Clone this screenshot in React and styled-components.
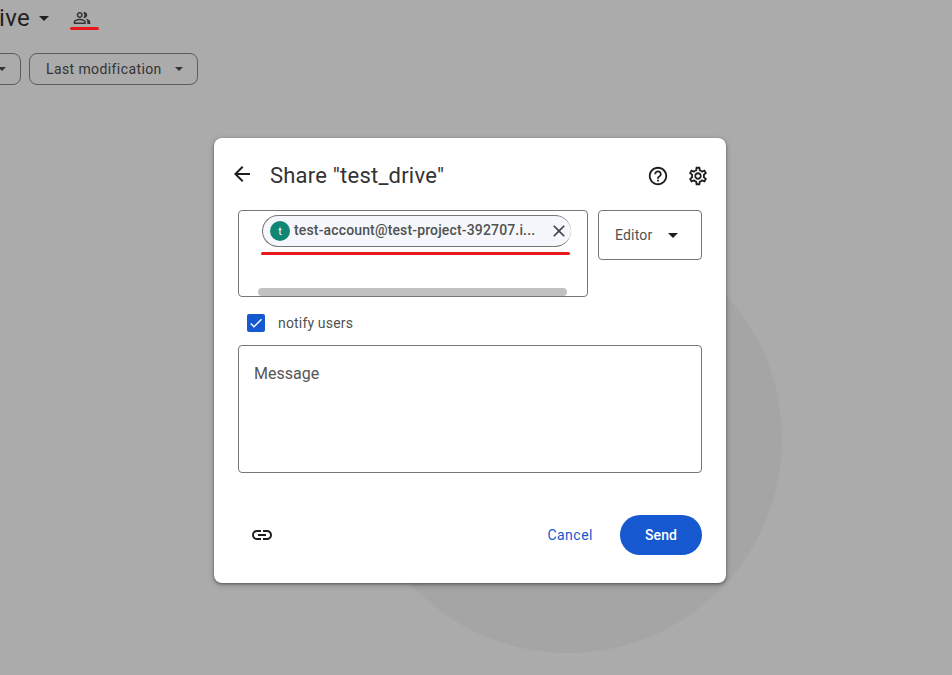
import styled, { createGlobalStyle } from "styled-components";
import {
  MdArrowBack,
  MdCheck,
  MdClose,
  MdHelpOutline,
  MdLink,
  MdOutlinePeopleAlt,
  MdOutlineSettings,
} from "react-icons/md";

const GlobalStyle = createGlobalStyle`
  html, body {
    margin: 0;
    height: 100%;
    background: #ababab;
    overflow: hidden;
  }
  body {
    font-family: Roboto, "Liberation Sans", sans-serif;
  }
`;

const Page = styled.div`
  position: relative;
  width: 952px;
  height: 675px;
  overflow: hidden;
`;

const TopBar = styled.div`
  display: flex;
  align-items: center;
  height: 36px;
`;

const DriveName = styled.div`
  font-size: 24px;
  line-height: 36px;
  letter-spacing: 0.3px;
  color: #222;
  margin-left: -1px;
`;

const Caret = styled.span`
  display: inline-block;
  width: 0;
  height: 0;
  flex: none;
  border-left: ${({ size }) => size}px solid transparent;
  border-right: ${({ size }) => size}px solid transparent;
  border-top: ${({ size }) => size}px solid ${({ color }) => color};
`;

const NameCaret = styled(Caret)`
  margin-left: 9px;
`;

const PeopleButton = styled.div`
  position: relative;
  display: flex;
  margin-left: 24px;
  font-size: 18px;
  color: #333;

  &::after {
    content: "";
    position: absolute;
    left: -3px;
    bottom: -3px;
    width: 29px;
    height: 3px;
    border-radius: 2px;
    background: #e8171c;
  }
`;

const FilterRow = styled.div`
  display: flex;
  gap: 8px;
  margin: 17px 0 0 -60px;
`;

const FilterChip = styled.div`
  box-sizing: border-box;
  display: flex;
  align-items: center;
  justify-content: space-between;
  width: ${({ width }) => width}px;
  height: 32px;
  padding: 0 14px 0 16px;
  border: 1px solid #5c5c5c;
  border-radius: 8px;
  font-size: 14px;
  letter-spacing: 0.4px;
  color: #333;
`;

const ClippedChip = styled(FilterChip)`
  justify-content: flex-end;
`;

const Backdrop = styled.div`
  position: absolute;
  inset: 0;
  padding: 138px 0 0 214px;
`;

const Circle = styled.div`
  position: absolute;
  left: 354px;
  top: 225px;
  width: 428px;
  height: 428px;
  border-radius: 50%;
  background: #a5a5a5;
`;

const Dialog = styled.div`
  position: relative;
  box-sizing: border-box;
  width: 512px;
  height: 445px;
  padding: 24px 24px 28px;
  border-radius: 8px;
  background: #fff;
  box-shadow: 0 1px 3px rgba(0, 0, 0, 0.4), 0 2px 6px rgba(0, 0, 0, 0.2);
  display: flex;
  flex-direction: column;
`;

const Header = styled.div`
  display: flex;
  align-items: center;
  height: 28px;
  color: #1f1f1f;
`;

const BackIcon = styled(MdArrowBack)`
  font-size: 24px;
  margin: -4px 0 0 -8px;
`;

const Title = styled.h1`
  flex: 1;
  margin: 0 0 0 16px;
  font-size: 22px;
  font-weight: 400;
  line-height: 28px;
  letter-spacing: 0.22px;
  color: #333;
`;

const HeaderIcons = styled.div`
  display: flex;
  gap: 18px;
  margin-right: -7px;
  font-size: 22px;
`;

const ShareRow = styled.div`
  display: flex;
  align-items: flex-start;
  gap: 10px;
  margin-top: 20px;
`;

const Field = styled.div`
  position: relative;
  box-sizing: border-box;
  border: 1px solid #747775;
  border-radius: 4px;
`;

const RecipientField = styled(Field)`
  width: 350px;
  height: 87px;
  padding: 4px 0 0 23px;
  overflow: hidden;
`;

const Chip = styled.div`
  position: relative;
  box-sizing: border-box;
  display: flex;
  align-items: center;
  width: 309px;
  height: 32px;
  padding: 0 2px 0 7px;
  border: 1px solid #747775;
  border-right: none;
  border-radius: 16px;
  background: #f5f7fc;

  &::after {
    content: "";
    position: absolute;
    left: -2px;
    bottom: -9px;
    width: 309px;
    height: 3px;
    border-radius: 2px;
    background: #e8171c;
  }
`;

const Avatar = styled.div`
  display: flex;
  align-items: center;
  justify-content: center;
  flex: none;
  width: 20px;
  height: 20px;
  border-radius: 50%;
  background: #128675;
  color: #fff;
  font-size: 11px;
`;

const ChipLabel = styled.span`
  flex: 1;
  min-width: 0;
  margin: -2px 0 0 4px;
  white-space: nowrap;
  font-size: 14px;
  font-weight: 500;
  letter-spacing: 0.15px;
  color: #4f5250;
`;

const ChipClose = styled(MdClose)`
  flex: none;
  font-size: 20px;
  color: #444;
`;

const ScrollThumb = styled.div`
  position: absolute;
  left: 19px;
  bottom: 0;
  width: 309px;
  height: 8px;
  border-radius: 4px;
  background: #c1c1c1;
`;

const RoleSelect = styled(Field)`
  display: flex;
  align-items: center;
  width: 104px;
  height: 50px;
  padding-left: 16px;
  font-size: 14px;
  letter-spacing: 0.2px;
  color: #4f5250;
`;

const RoleCaret = styled(Caret)`
  margin-left: 15px;
`;

const NotifyRow = styled.label`
  display: flex;
  align-items: center;
  height: 18px;
  margin: 17px 0 0 9px;
  font-size: 14px;
  letter-spacing: 0.17px;
  color: #4f5250;
`;

const CheckBox = styled.span`
  display: flex;
  align-items: center;
  justify-content: center;
  width: 18px;
  height: 18px;
  margin-right: 13px;
  border-radius: 2px;
  background: #1558d0;
  color: #fff;
  font-size: 16px;
`;

const MessageBox = styled(Field)`
  height: 128px;
  margin-top: 13px;
  padding: 18px 15px;
  font-size: 16px;
  line-height: 20px;
  color: #555;
`;

const Footer = styled.div`
  display: flex;
  align-items: center;
  margin-top: 42px;
`;

const LinkIcon = styled(MdLink)`
  font-size: 24px;
  margin-left: 12px;
  color: #1f1f1f;
`;

const Cancel = styled.span`
  margin-left: auto;
  font-size: 14px;
  letter-spacing: 0.5px;
  color: #1558d0;
`;

const SendButton = styled.div`
  display: flex;
  align-items: center;
  justify-content: center;
  width: 82px;
  height: 40px;
  margin-left: 27px;
  border-radius: 20px;
  background: #1558d0;
  color: #fff;
  font-size: 14px;
  font-weight: 500;
  letter-spacing: 0.1px;
`;

const App = () => {
  return (
    <Page>
      <GlobalStyle />
      <TopBar>
        <DriveName>ive</DriveName>
        <NameCaret size={5} color="#1f1f1f" />
        <PeopleButton>
          <MdOutlinePeopleAlt />
        </PeopleButton>
      </TopBar>
      <FilterRow>
        <ClippedChip width={81}>
          <Caret size={4} color="#333" />
        </ClippedChip>
        <FilterChip width={169}>
          Last modification
          <Caret size={4} color="#333" />
        </FilterChip>
      </FilterRow>
      <Backdrop>
        <Circle />
        <Dialog>
          <Header>
            <BackIcon />
            <Title>Share "test_drive"</Title>
            <HeaderIcons>
              <MdHelpOutline />
              <MdOutlineSettings />
            </HeaderIcons>
          </Header>
          <ShareRow>
            <RecipientField>
              <Chip>
                <Avatar>t</Avatar>
                <ChipLabel>test-account@test-project-392707.i...</ChipLabel>
                <ChipClose />
              </Chip>
              <ScrollThumb />
            </RecipientField>
            <RoleSelect>
              Editor
              <RoleCaret size={5} color="#1f1f1f" />
            </RoleSelect>
          </ShareRow>
          <NotifyRow>
            <CheckBox>
              <MdCheck />
            </CheckBox>
            notify users
          </NotifyRow>
          <MessageBox>Message</MessageBox>
          <Footer>
            <LinkIcon />
            <Cancel>Cancel</Cancel>
            <SendButton>Send</SendButton>
          </Footer>
        </Dialog>
      </Backdrop>
    </Page>
  );
};

export default App;
